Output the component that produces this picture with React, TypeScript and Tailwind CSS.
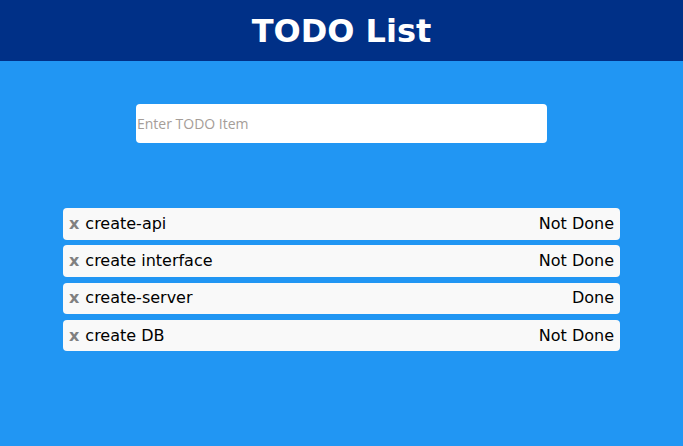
import { useState } from "react";

type Todo = {
  id: number;
  title: string;
  done: boolean;
};

const initialTodos: Todo[] = [
  { id: 1, title: "create-api", done: false },
  { id: 2, title: "create interface", done: false },
  { id: 3, title: "create-server", done: true },
  { id: 4, title: "create DB", done: false },
];

export default function App() {
  const [todos, setTodos] = useState<Todo[]>(initialTodos);
  const [text, setText] = useState("");

  const addTodo = (e: React.FormEvent) => {
    e.preventDefault();
    if (!text.trim()) return;
    setTodos([...todos, { id: Date.now(), title: text.trim(), done: false }]);
    setText("");
  };

  const toggle = (id: number) =>
    setTodos(todos.map((t) => (t.id === id ? { ...t, done: !t.done } : t)));

  const remove = (id: number) => setTodos(todos.filter((t) => t.id !== id));

  return (
    <div
      className="min-h-screen bg-[#2196f3]"
      style={{ fontFamily: '"DejaVu Sans", Verdana, sans-serif' }}
    >
      {/* HEADER */}
      <header className="h-[61px] bg-[#003087] flex items-center justify-center">
        <h1 className="text-[32px] font-bold text-white leading-none">
          TODO List
        </h1>
      </header>

      {/* INPUT */}
      <form onSubmit={addTodo} className="flex justify-center pt-[43px]">
        <input
          value={text}
          onChange={(e) => setText(e.target.value)}
          placeholder="Enter TODO Item"
          className="w-[411px] h-[38.5px] bg-white rounded-[4px] px-px text-[14px] outline-none placeholder:text-[#a59d98]"
          style={{ fontFamily: '"Open Sans", sans-serif' }}
        />
      </form>

      {/* LIST */}
      <ul className="w-[557px] mx-auto mt-[65.5px] flex flex-col gap-[5.8px]">
        {todos.map((todo) => (
          <li
            key={todo.id}
            className="h-[31.5px] bg-[#f9f9f9] rounded-[4px] px-[6px] flex items-center text-[16px] text-black"
          >
            <button
              onClick={() => remove(todo.id)}
              className="font-bold text-[#808080] mr-[6px] leading-none"
            >
              x
            </button>
            <span className="flex-1">{todo.title}</span>
            <button onClick={() => toggle(todo.id)}>
              {todo.done ? "Done" : "Not Done"}
            </button>
          </li>
        ))}
      </ul>
    </div>
  );
}
